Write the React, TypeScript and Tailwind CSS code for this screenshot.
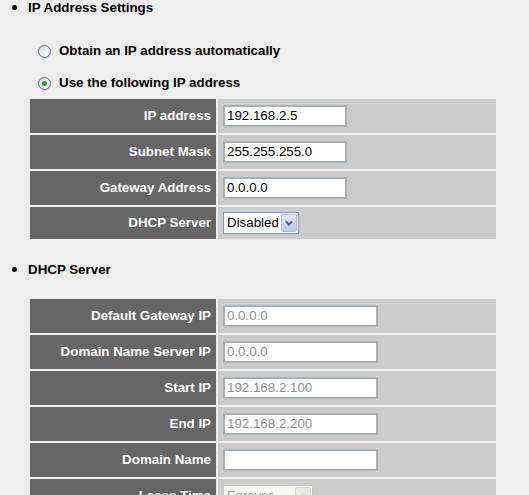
import React from "react";

const Bullet = ({ label }: { label: string }) => (
  <div className="flex items-center h-[15px]">
    <span className="ml-[12px] w-[5px] h-[5px] rounded-full bg-black" />
    <span className="ml-[11px] font-bold text-[13.33px] text-black">{label}</span>
  </div>
);

const Radio = ({ label, checked }: { label: string; checked?: boolean }) => (
  <div className="flex items-center h-[20px] pl-[38px]">
    <span className="w-[13px] h-[13px] rounded-full border border-[#4d6e94] bg-gradient-to-br from-[#dcdcd7] to-white flex items-center justify-center">
      {checked && <span className="w-[5px] h-[5px] rounded-full bg-[#21a121]" />}
    </span>
    <span className="ml-[8px] font-bold text-[13.33px] text-black">{label}</span>
  </div>
);

const TextBox = ({ value, wide, disabled }: { value: string; wide?: boolean; disabled?: boolean }) => (
  <div
    className={
      "h-[22px] border-2 border-[#a9b0b6] bg-white flex items-center px-[2px] text-[13.33px] " +
      (wide ? "w-[155px] " : "w-[124px] ") +
      (disabled ? "text-[#8f8f8f]" : "text-black")
    }
  >
    {value}
  </div>
);

const Select = ({ value, disabled }: { value: string; disabled?: boolean }) => (
  <div
    className={
      "h-[22px] flex items-center justify-between border pl-[3px] pr-[1px] text-[13.33px] " +
      (disabled ? "w-[90px] bg-[#f7f7f3] text-[#a0a0a0] border-[#c9c7ba]" : "w-[76px] bg-white text-black border-[#7f9db9]")
    }
  >
    <span>{value}</span>
    <span
      className={
        "w-[16px] h-[18px] rounded-[2px] flex items-center justify-center border " +
        (disabled ? "bg-[#e9e8e2] border-[#d8d6cc]" : "bg-gradient-to-b from-[#e2e8f8] to-[#b8c8ec] border-[#a8b9e0]")
      }
    >
      <svg width="8" height="6" viewBox="0 0 8 6">
        <path d="M1 1.5 L4 4.5 L7 1.5" fill="none" stroke={disabled ? "#c0c0c0" : "#4d6185"} strokeWidth="2" />
      </svg>
    </span>
  </div>
);

type Row = { label: string; field: React.ReactNode; short?: boolean };

const Table = ({ rows }: { rows: Row[] }) => (
  <div className="ml-[30px] w-[466px] flex flex-col gap-[2px]">
    {rows.map((r) => (
      <div key={r.label} className={"grid grid-cols-[186px_1fr] gap-[2px] " + (r.short ? "h-[32px]" : "h-[34px]")}>
        <div className="bg-[#666666] text-white font-bold text-[13.33px] flex items-center justify-end pr-[5px] whitespace-nowrap">
          {r.label}
        </div>
        <div className="bg-[#cccccc] flex items-center pl-[5px]">{r.field}</div>
      </div>
    ))}
  </div>
);

export default function App() {
  return (
    <div className="min-h-[495px] bg-[#ededed] overflow-hidden" style={{ fontFamily: '"Liberation Sans", Arial, sans-serif' }}>
      <Bullet label="IP Address Settings" />
      <div className="mt-[26px]">
        <Radio label="Obtain an IP address automatically" />
      </div>
      <div className="mt-[12px]">
        <Radio label="Use the following IP address" checked />
      </div>
      <div className="mt-[6px]">
        <Table
          rows={[
            { label: "IP address", field: <TextBox value="192.168.2.5" /> },
            { label: "Subnet Mask", field: <TextBox value="255.255.255.0" /> },
            { label: "Gateway Address", field: <TextBox value="0.0.0.0" /> },
            { label: "DHCP Server", field: <Select value="Disabled" />, short: true },
          ]}
        />
      </div>
      <div className="mt-[23px]">
        <Bullet label="DHCP Server" />
      </div>
      <div className="mt-[22px]">
        <Table
          rows={[
            { label: "Default Gateway IP", field: <TextBox value="0.0.0.0" wide disabled /> },
            { label: "Domain Name Server IP", field: <TextBox value="0.0.0.0" wide disabled /> },
            { label: "Start IP", field: <TextBox value="192.168.2.100" wide disabled /> },
            { label: "End IP", field: <TextBox value="192.168.2.200" wide disabled /> },
            { label: "Domain Name", field: <TextBox value="" wide /> },
            { label: "Lease Time", field: <Select value="Forever" disabled /> },
          ]}
        />
      </div>
    </div>
  );
}
